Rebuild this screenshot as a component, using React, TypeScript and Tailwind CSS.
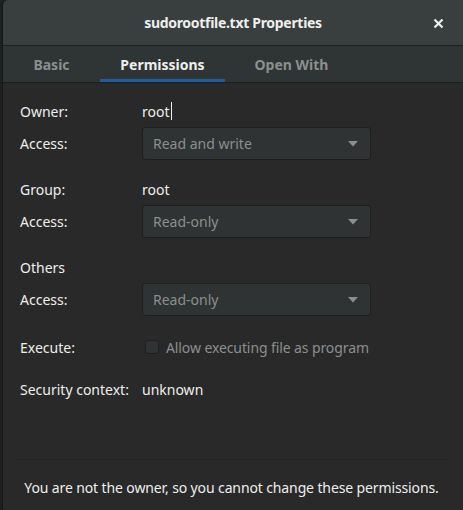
import React from "react";

function Combo({ value }: { value: string }) {
  return (
    <div className="flex h-[33px] w-[229px] items-center justify-between rounded-[3px] border border-[#1c1f1f] bg-[#2f3333] pl-[10px] pr-[12px] text-[#8c8f8f]">
      <span>{value}</span>
      <svg width="10" height="6" viewBox="0 0 10 6">
        <path d="M0 0h10L5 5.5z" fill="#8c8f8f" />
      </svg>
    </div>
  );
}

function Row({ label, children, className = "" }: { label: string; children?: React.ReactNode; className?: string }) {
  return (
    <div className={`flex items-center ${className}`}>
      <div className="w-[122px] shrink-0">{label}</div>
      <div className="flex items-center">{children}</div>
    </div>
  );
}

export default function App() {
  return (
    <div className="h-[510px] w-[463px] bg-[#1d2020]" style={{ fontFamily: '"Noto Sans", "Open Sans", sans-serif' }}>
      <div className="ml-[2px] flex h-full flex-col overflow-hidden rounded-tl-[6px] border-l border-[#161818] bg-[#292929] text-[14px] text-[#eeeeec]">
        {/* titlebar */}
        <div className="relative flex h-[46px] shrink-0 items-center justify-center border-b border-[#1e2121] bg-[#393f3f]">
          <span className="font-bold tracking-[-0.3px]">sudorootfile.txt Properties</span>
          <span className="absolute right-[19px] top-[18px] leading-none">
            <svg width="11" height="11" viewBox="0 0 11 11">
              <path d="M1.5 1.5l8 8M9.5 1.5l-8 8" stroke="#eeeeec" strokeWidth="2.2" />
            </svg>
          </span>
        </div>

        {/* tabs */}
        <div className="flex h-[37px] shrink-0 items-stretch border-b border-[#1c1f1f] bg-[#2f3434] font-bold">
          <div className="flex w-[97px] items-center justify-center text-[#8b8f8f]">Basic</div>
          <div className="flex w-[125px] items-center justify-center border-b-[3px] border-[#215d9c] pt-[3px]">Permissions</div>
          <div className="flex w-[133px] items-center justify-center text-[#8b8f8f]">Open With</div>
        </div>

        {/* body */}
        <div className="flex flex-1 flex-col px-[17px] pt-[16px]">
          <Row label="Owner:" className="h-[24px]">
            <span>root</span>
            <span className="ml-[1px] inline-block h-[18px] w-px bg-[#eeeeec]" />
          </Row>
          <Row label="Access:" className="mt-[4px]">
            <Combo value="Read and write" />
          </Row>

          <Row label="Group:" className="mt-[17px] h-[24px]">
            <span>root</span>
          </Row>
          <Row label="Access:" className="mt-[4px]">
            <Combo value="Read-only" />
          </Row>

          <Row label="Others" className="mt-[17px] h-[24px]" />
          <Row label="Access:" className="mt-[4px]">
            <Combo value="Read-only" />
          </Row>

          <Row label="Execute:" className="mt-[19px] h-[24px]">
            <span className="ml-[3px] inline-block h-[14px] w-[14px] rounded-[3px] border border-[#1c1f1f] bg-[#2f3333]" />
            <span className="ml-[7px] tracking-[-0.1px] text-[#8c8f8f]">Allow executing file as program</span>
          </Row>

          <Row label="Security context:" className="mt-[18px] h-[24px]">
            <span>unknown</span>
          </Row>

          <div className="flex-1" />
          <div className="-mx-[3px] border-t border-[#222424]" />
          <div className="flex h-[50px] items-center justify-center whitespace-nowrap pr-[3px] pt-[4px] tracking-[-0.12px]">
            You are not the owner, so you cannot change these permissions.
          </div>
        </div>
      </div>
    </div>
  );
}
